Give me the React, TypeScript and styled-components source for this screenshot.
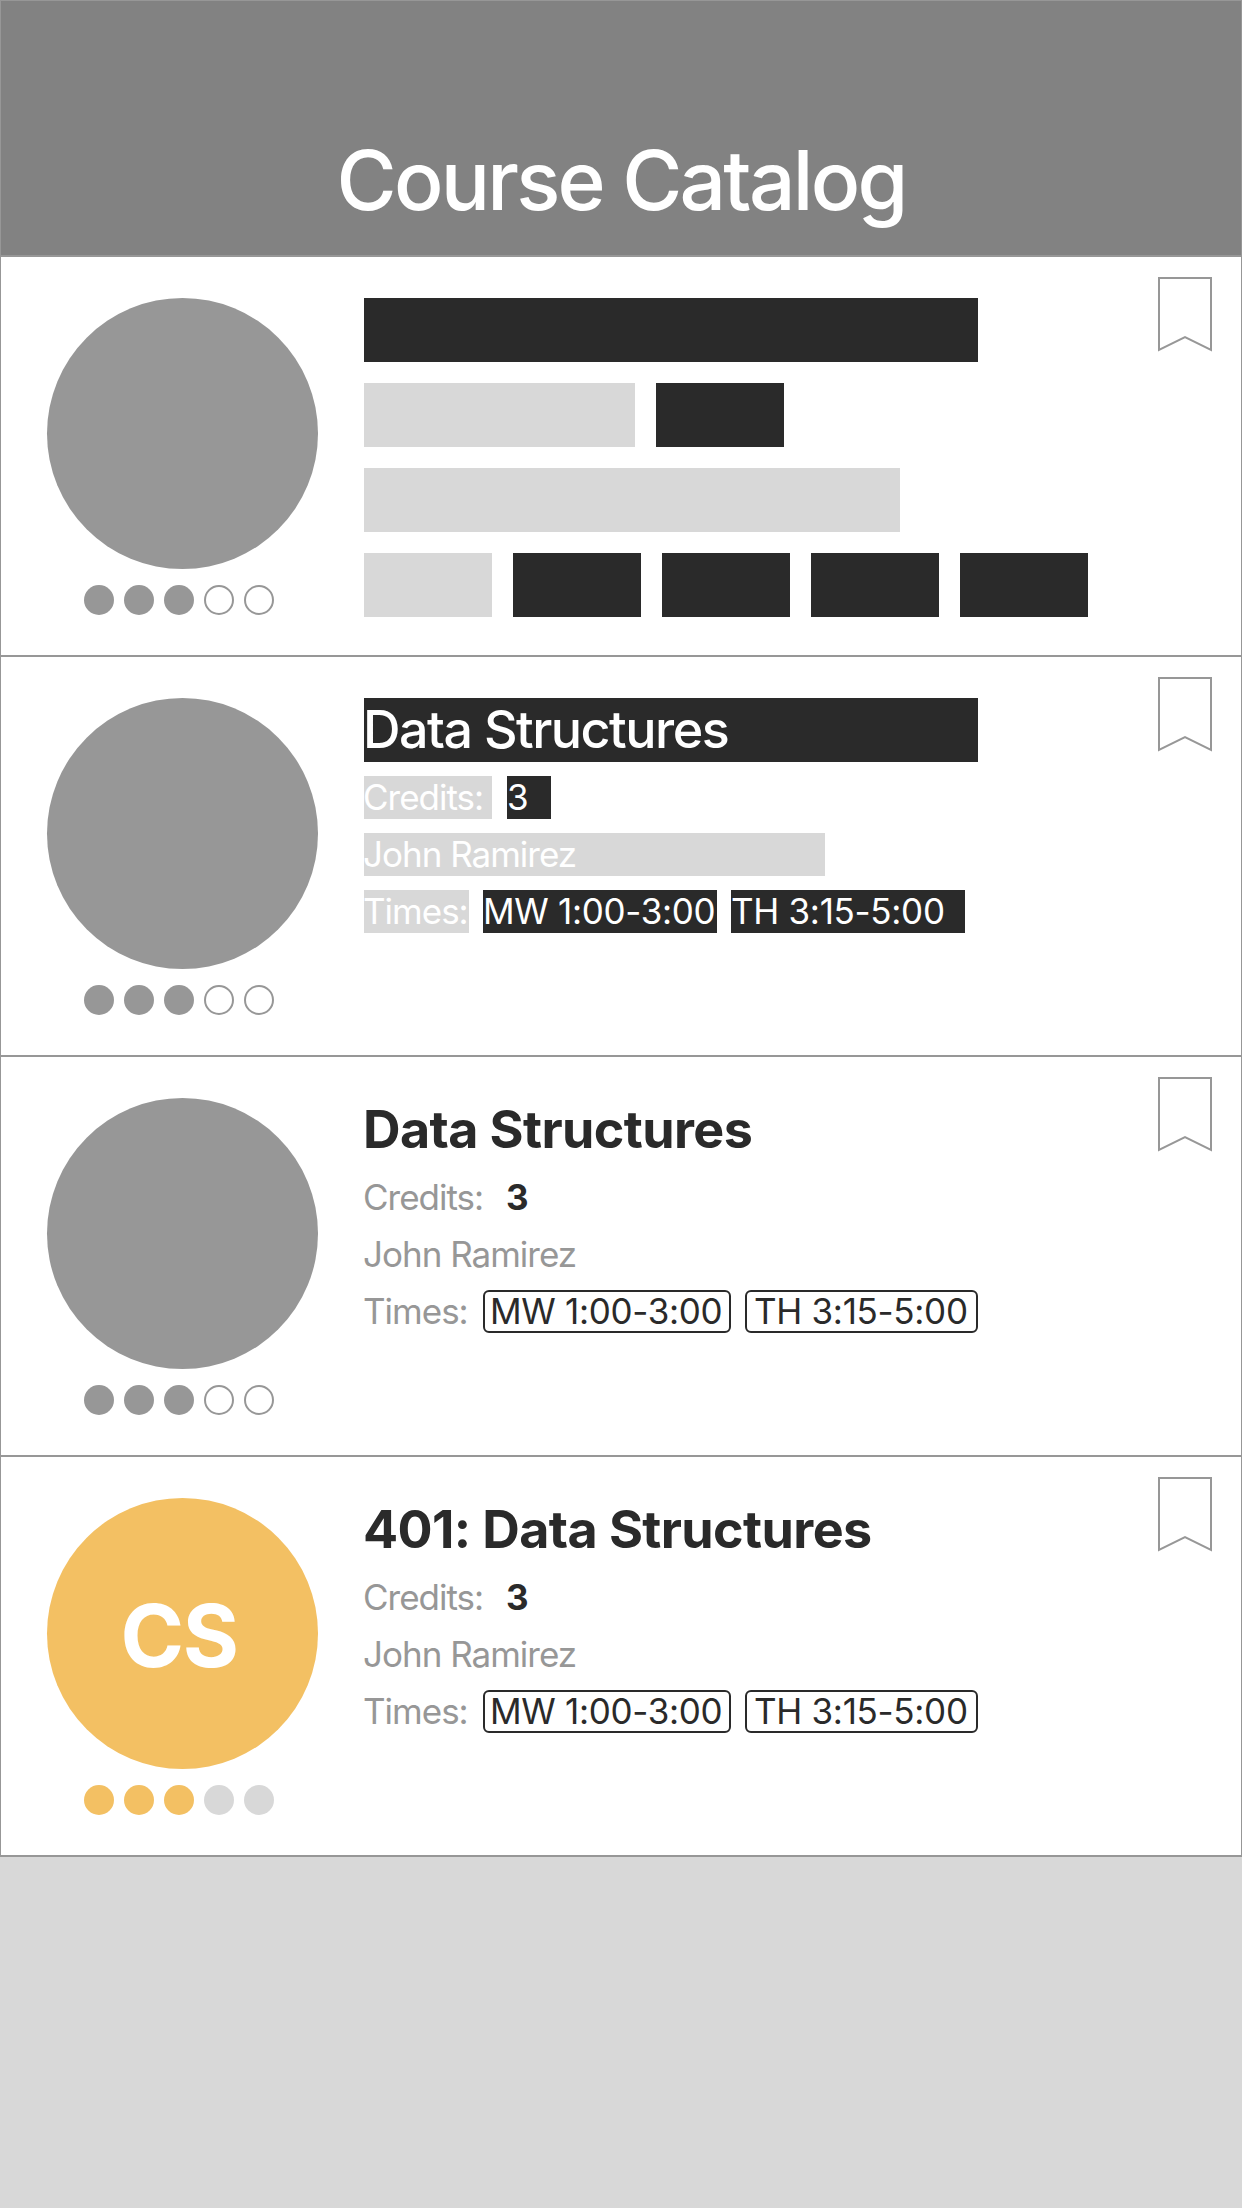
import React from "react";
import styled, { createGlobalStyle } from "styled-components";

const Global = createGlobalStyle`
  html, body { margin: 0; padding: 0; background: #d8d8d8; }
  body { font-family: Inter, "Liberation Sans", sans-serif; width: 1242px; min-height: 2208px; }
  * { box-sizing: border-box; }
`;

const Page = styled.div`
  width: 1242px;
  min-height: 2208px;
  background: #d8d8d8;
`;

const Header = styled.header`
  height: 257px;
  background: #828282;
  border: 1px solid #979797;
  border-bottom-width: 2px;
  display: flex;
  justify-content: center;
  align-items: flex-end;
  padding-bottom: 26px;
`;

const Title = styled.h1`
  margin: 0;
  font-size: 82px;
  line-height: 96px;
  font-weight: 500;
  letter-spacing: -2.75px;
  color: #fff;
`;

const Card = styled.article`
  position: relative;
  height: 400px;
  background: #fff;
  border-left: 1px solid #979797;
  border-right: 1px solid #979797;
  border-bottom: 2px solid #979797;
  display: flex;
  padding: 41px 0 0 46px;
  gap: 46px;
`;

const Side = styled.div`
  width: 271px;
  display: flex;
  flex-direction: column;
  gap: 16px;
`;

const Avatar = styled.div<{ $color: string }>`
  width: 271px;
  height: 271px;
  border-radius: 50%;
  background: ${(p) => p.$color};
  color: #fff;
  display: flex;
  align-items: center;
  justify-content: center;
  padding: 4px 7px 0 0;
  font-size: 86px;
  font-weight: 700;
  letter-spacing: -1.5px;
`;

const Dots = styled.div`
  display: flex;
  gap: 10px;
  padding-left: 37px;
`;

const Dot = styled.span<{ $fill: string; $ring?: boolean }>`
  width: 30px;
  height: 30px;
  border-radius: 50%;
  background: ${(p) => (p.$ring ? "#fff" : p.$fill)};
  border: ${(p) => (p.$ring ? `2px solid ${p.$fill}` : "none")};
`;

const Body = styled.div<{ $gap: number }>`
  display: flex;
  flex-direction: column;
  gap: ${(p) => p.$gap}px;
`;

const Row = styled.div<{ $gap: number }>`
  display: flex;
  gap: ${(p) => p.$gap}px;
`;

const Block = styled.div<{ $w: number; $dark?: boolean }>`
  width: ${(p) => p.$w}px;
  height: 64px;
  background: ${(p) => (p.$dark ? "#2a2a2a" : "#d8d8d8")};
`;

const CourseName = styled.div<{ $w?: number; $bold?: boolean; $bar?: boolean }>`
  width: ${(p) => (p.$w ? `${p.$w}px` : "auto")};
  height: 64px;
  font-size: 52px;
  line-height: 64px;
  white-space: nowrap;
  text-indent: -1px;
  font-weight: ${(p) => (p.$bold ? 700 : 500)};
  letter-spacing: ${(p) => (p.$bold ? "-0.6px" : "-1.5px")};
  color: ${(p) => (p.$bar ? "#fff" : "#2a2a2a")};
  background: ${(p) => (p.$bar ? "#2a2a2a" : "transparent")};
`;

const Label = styled.div<{ $w?: number; $bar?: boolean }>`
  width: ${(p) => (p.$w ? `${p.$w}px` : "auto")};
  height: 43px;
  font-size: 35px;
  line-height: 43px;
  white-space: nowrap;
  text-indent: -1px;
  font-weight: 400;
  letter-spacing: -1px;
  color: ${(p) => (p.$bar ? "#fff" : "#979797")};
  background: ${(p) => (p.$bar ? "#d8d8d8" : "transparent")};
`;

const Value = styled.div<{ $w: number; $bar?: boolean }>`
  width: ${(p) => p.$w}px;
  height: 43px;
  font-size: 35px;
  line-height: 43px;
  white-space: nowrap;
  text-indent: -1px;
  font-weight: ${(p) => (p.$bar ? 400 : 700)};
  color: ${(p) => (p.$bar ? "#fff" : "#2a2a2a")};
  background: ${(p) => (p.$bar ? "#2a2a2a" : "transparent")};
  padding-left: ${(p) => (p.$bar ? 1 : 0)}px;
`;

const Time = styled.div<{ $w: number; $pad: number; $bar?: boolean }>`
  width: ${(p) => p.$w}px;
  height: 43px;
  font-size: 35px;
  line-height: ${(p) => (p.$bar ? 43 : 39)}px;
  white-space: nowrap;
  font-weight: 400;
  letter-spacing: -0.3px;
  padding-left: ${(p) => p.$pad}px;
  color: ${(p) => (p.$bar ? "#fff" : "#2a2a2a")};
  background: ${(p) => (p.$bar ? "#2a2a2a" : "#fff")};
  border: ${(p) => (p.$bar ? "none" : "2px solid #2a2a2a")};
  border-radius: ${(p) => (p.$bar ? 0 : 6)}px;
`;

const Bookmark = styled.svg`
  position: absolute;
  top: 20px;
  right: 29px;
  width: 55px;
  height: 75px;
  fill: none;
  stroke: #979797;
  stroke-width: 2;
`;

const BookmarkIcon = () => (
  <Bookmark viewBox="0 0 55 75">
    <path d="M2 1H54V73L28 60L2 73Z" />
  </Bookmark>
);

const Rating = ({ fill, empty, ring }: { fill: string; empty: string; ring: boolean }) => (
  <Dots>
    {[0, 1, 2].map((i) => <Dot key={i} $fill={fill} />)}
    {[3, 4].map((i) => <Dot key={i} $fill={empty} $ring={ring} />)}
  </Dots>
);

const GreySide = () => (
  <Side>
    <Avatar $color="#979797" />
    <Rating fill="#979797" empty="#979797" ring />
  </Side>
);

const Details = ({ name, bar }: { name: string; bar?: boolean }) => (
  <Body $gap={14}>
    <CourseName $bar={bar} $bold={!bar} $w={bar ? 614 : undefined}>{name}</CourseName>
    <Row $gap={15}>
      <Label $bar={bar} $w={128}>Credits:</Label>
      <Value $bar={bar} $w={44}>3</Value>
    </Row>
    <Label $bar={bar} $w={bar ? 461 : undefined}>John Ramirez</Label>
    <Row $gap={14}>
      <Label $bar={bar} $w={105}>Times:</Label>
      <Time $bar={bar} $w={bar ? 234 : 248} $pad={bar ? 0 : 5}>MW 1:00-3:00</Time>
      <Time $bar={bar} $w={bar ? 234 : 233} $pad={bar ? 0 : 7}>TH 3:15-5:00</Time>
    </Row>
  </Body>
);

export default function App() {
  return (
    <Page>
      <Global />
      <Header>
        <Title>Course Catalog</Title>
      </Header>

      <Card>
        <GreySide />
        <Body $gap={21}>
          <Block $w={614} $dark />
          <Row $gap={21}>
            <Block $w={271} />
            <Block $w={128} $dark />
          </Row>
          <Block $w={536} />
          <Row $gap={21}>
            <Block $w={128} />
            <Block $w={128} $dark />
            <Block $w={128} $dark />
            <Block $w={128} $dark />
            <Block $w={128} $dark />
          </Row>
        </Body>
        <BookmarkIcon />
      </Card>

      <Card>
        <GreySide />
        <Details name="Data Structures" bar />
        <BookmarkIcon />
      </Card>

      <Card>
        <GreySide />
        <Details name="Data Structures" />
        <BookmarkIcon />
      </Card>

      <Card>
        <Side>
          <Avatar $color="#f3c063">CS</Avatar>
          <Rating fill="#f3c063" empty="#d8d8d8" ring={false} />
        </Side>
        <Details name="401: Data Structures" />
        <BookmarkIcon />
      </Card>
    </Page>
  );
}
